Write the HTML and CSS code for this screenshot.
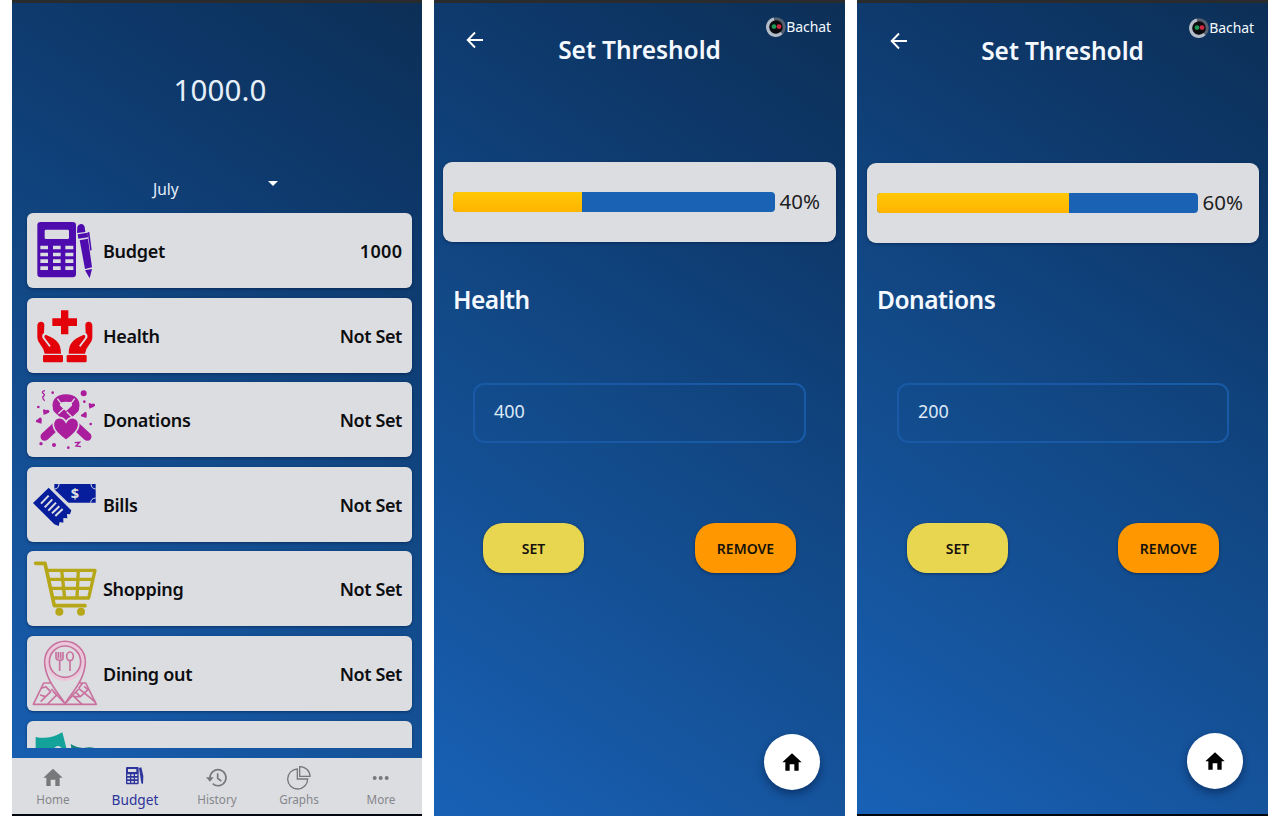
FILE: index.html
```html
<!DOCTYPE html>
<html lang="en">
<head>
<meta charset="utf-8">
<title>Bachat</title>
<link rel="stylesheet" href="styles.css">
</head>
<body>
<main class="screens">
  <section class="phone phone-budget">
    <header class="summary">
      <div class="total">1000.0</div>
      <div class="month"><span>July</span><i class="caret"></i></div>
    </header>
    <div class="list">
      <article class="card">
        <svg class="pic" viewBox="45 24 228 225">
          <g fill="#4e0cae">
            <path fill-rule="evenodd" d="M86 51H182Q192 51 192 61V207Q192 217 182 217H86Q76 217 76 207V61Q76 51 86 51ZM102 74Q98 74 98 78V98Q98 102 102 102H167Q171 102 171 98V78Q171 74 167 74Z"/>
            <path d="M195 84L196 66Q198 58 206 57Q215 56 218 66L220 81ZM197 88L227 83L228 97L199 101ZM203 106L228 101L240 187L219 192ZM219 196L240 192L233 220ZM227 82L232 81L239 135L235 137Z"/>
          </g>
          <path fill="#dcdde1" d="M85 122h23v11h-23zm38 0h23v11h-23zm37 0h24v11h-24zM85 143h23v11h-23zm38 0h23v11h-23zm37 0h24v11h-24zM85 163h23v11h-23zm38 0h23v11h-23zm37 0h24v11h-24zM85 184h23v11h-23zm38 0h23v11h-23zm37 0h24v11h-24z"/>
        </svg>
        <span class="name">Budget</span><span class="value amount">1000</span>
      </article>
      <article class="card">
        <svg class="pic" viewBox="45 278 228 225">
          <g fill="#e30209">
            <path d="M147 315h22v24h26v23h-26v25h-22v-25h-26v-23h26z"/>
            <g id="hand">
              <path d="M76 360Q77 350 87 349Q97 350 97 359L96 383Q89 387 91 397L112 425L116 421L98 397Q95 388 103 389Q128 399 138 412Q147 423 147 445H98Q97 432 86 419Q76 408 76 397Z"/>
              <rect x="93" y="449" width="60" height="22" rx="4"/>
            </g>
            <use href="#hand" transform="translate(317 0) scale(-1 1)"/>
          </g>
        </svg>
        <span class="name">Health</span><span class="value">Not Set</span>
      </article>
      <article class="card">
        <svg class="pic" viewBox="45 22 228 225">
          <g fill="none" stroke="#aa1e9d">
            <path d="M98 186L189 102M226 186L135 102" stroke-linecap="round" stroke-width="25"/>
            <path d="M133 97Q129 71 162 70Q195 71 191 97" stroke-width="22"/>
          </g>
          <path fill="#dcdde1" d="M147 84Q162 78 177 84L162 98Z"/>
          <path fill="none" stroke="#dcdde1" stroke-width="4" d="M136 72L147 86M188 72L177 86M139 117L177 82M164 111L188 135"/>
          <path fill="#aa1e9d" stroke="#dcdde1" stroke-width="5" d="M162 197Q126 172 124 153Q123 132 140 129Q155 128 162 142Q170 128 184 129Q202 133 200 153Q198 172 162 197Z"/>
          <g fill="#aa1e9d">
            <circle cx="215" cy="56" r="9"/><circle cx="122" cy="54" r="4"/><circle cx="217" cy="81" r="4"/><circle cx="79" cy="97" r="4"/><circle cx="236" cy="148" r="4"/><circle cx="87" cy="207" r="5"/><circle cx="126" cy="211" r="6"/><circle cx="169" cy="219" r="4"/>
            <path id="mini" d="M95 121L93 107Q96 101 101 107Q107 103 112 108Q114 114 107 116Z"/>
            <use href="#mini" x="137" y="-19"/>
            <path id="mini2" d="M72 142Q70 136 78 134Q81 128 87 129Q91 132 88 147Z"/>
            <use href="#mini2" x="135" y="-17"/>
          </g>
          <path d="M99 48Q88 50 93 56Q101 60 94 65Q89 69 98 78M188 204L203 203L192 214L207 216" fill="none" stroke="#aa1e9d" stroke-width="4"/>
        </svg>
        <span class="name">Donations</span><span class="value">Not Set</span>
      </article>
      <article class="card">
        <svg class="pic" viewBox="45 276 228 225">
          <path fill="#061e9c" d="M127 327H251V383H165L127 347Z"/>
          <path fill="#061e9c" d="M110 338L178 406L174 418L165 417L166 430L154 429L154 443L143 441L140 453L127 448L63 384Z"/>
          <g fill="none" stroke="#dcdde1">
            <path stroke-width="3" d="M127 342Q140 342 141 327M237 327Q238 341 251 342M236 383Q237 370 251 369"/>
            <path stroke-width="6" d="M87 386L110 362M98 397L121 373M109 407L132 383M120 415L142 394M130 423L152 402"/>
            <path stroke-width="4" d="M124 343L171 388"/>
          </g>
          <text x="189" y="371" text-anchor="middle" class="dollar">$</text>
        </svg>
        <span class="name">Bills</span><span class="value">Not Set</span>
      </article>
      <article class="card">
        <svg class="pic" viewBox="45 20 228 225">
          <g fill="none" stroke="#b6a718" stroke-linejoin="round">
            <path stroke-width="11" stroke-linecap="round" d="M71 57H99L127 184H219"/>
            <path stroke-width="10" d="M104 78H249L230 161H123M109 105H243M116 132H237M149 78L158 161M199 78L195 161"/>
          </g>
          <g fill="#b6a718"><circle cx="142" cy="202" r="12"/><circle cx="207" cy="202" r="12"/></g>
        </svg>
        <span class="name">Shopping</span><span class="value">Not Set</span>
      </article>
      <article class="card">
        <svg class="pic" viewBox="45 273 228 225">
          <g fill="none" stroke="#c9729f" stroke-width="5" stroke-linejoin="round">
            <path d="M126 414H95L64 478H253L221 414H192"/>
            <path d="M88 430L101 425L116 440L101 455L84 450M118 432L159 476M136 448L107 477M101 455L86 470M124 440L132 448"/>
            <path d="M200 432L159 476M182 451L210 478M192 442L205 455L186 455M200 430L250 471M205 455L228 434L216 424M212 414L200 430"/>
            <path fill="#dcdde1" d="M159 476C144 450 98 404 98 350A61 61 0 0 1 220 350C220 404 174 450 159 476Z"/>
            <circle cx="159" cy="350" r="54" stroke="#edc6dc" stroke-width="8"/>
            <circle cx="159" cy="350" r="47"/>
            <path d="M143 378V344M132 321V339Q133 346 143 346Q153 346 153 339V321M139 321V341M146 321V341M174 378V347"/>
            <ellipse cx="174" cy="334" rx="10" ry="13"/>
          </g>
        </svg>
        <span class="name">Dining out</span><span class="value">Not Set</span>
      </article>
      <article class="card">
        <svg class="pic" viewBox="45 48 228 225">
          <path fill="#13a39a" d="M71 96Q112 105 151 82L165 136H71Z"/>
          <path fill="#dcdde1" d="M126 130Q138 116 150 130Z"/>
          <path fill="#13837f" d="M176 117Q192 128 214 129Q230 125 246 128V140H180Z"/>
        </svg>
      </article>
    </div>
    <nav class="tabs">
      <a class="tab">
        <svg viewBox="78 183 90 72"><path fill="#77787a" d="M123 191L152 218H143V243H130V224H116V243H103V218H94Z"/></svg>
        <span>Home</span>
      </a>
      <a class="tab active">
        <svg viewBox="324 183 90 72">
          <rect x="342" y="186" width="38" height="52" rx="3" fill="#2d349a"/>
          <path fill="#dcdde1" d="M348 192h25v9h-25zM346 208h8v5h-8zm12 0h7v5h-7zm11 0h7v5h-7zM346 218h8v5h-8zm12 0h7v5h-7zm11 0h7v5h-7zM346 228h8v5h-8zm12 0h7v5h-7zm11 0h7v5h-7z"/>
          <path fill="#2d349a" d="M381 189L388 187L394 213L393 237L388 235Z"/>
        </svg>
        <span>Budget</span>
      </a>
      <a class="tab">
        <svg viewBox="-24 183 90 72">
          <path fill="none" stroke="#77787a" stroke-width="5" d="M0 219A24 24 0 1 1 8 236M23 205V220L34 228"/>
          <path fill="#77787a" d="M-12 217H11L0 230Z"/>
        </svg>
        <span>History</span>
      </a>
      <a class="tab">
        <svg viewBox="222 183 90 72">
          <path fill="none" stroke="#77787a" stroke-width="4" d="M262 192A30 30 0 1 0 293 222H262ZM269 185V214H300A30 30 0 0 0 269 185Z"/>
        </svg>
        <span>Graphs</span>
      </a>
      <a class="tab">
        <svg viewBox="468 183 90 72"><g fill="#77787a"><circle cx="494" cy="219" r="6"/><circle cx="512" cy="219" r="6"/><circle cx="530" cy="219" r="6"/></g></svg>
        <span>More</span>
      </a>
    </nav>
  </section>

  <section class="phone phone-form">
    <header class="bar">
      <svg class="back" viewBox="0 0 18 18"><path d="M17 9H2M9 1.5L1.7 9L9 16.5"/></svg>
      <h1>Set Threshold</h1>
      <div class="brand">
        <svg viewBox="0 0 20 20"><circle cx="10" cy="10" r="8.3" fill="#0b0b0f" stroke="#54606f" stroke-width="3"/><path d="M8 2A8.3 8.3 0 1 0 15.5 16.2" fill="none" stroke="#b4bcc9" stroke-width="3"/><circle cx="8" cy="9.6" r="2.4" fill="#1c9a55"/><circle cx="13" cy="9.6" r="2.4" fill="#cf2740"/></svg>
        <span>Bachat</span>
      </div>
    </header>
    <div class="meter">
      <div class="track"><div class="fill" style="width:40%"></div></div>
      <span class="pct">40%</span>
    </div>
    <h2>Health</h2>
    <div class="field">400</div>
    <div class="actions"><button class="set">SET</button><button class="remove">REMOVE</button></div>
    <div class="fab"><svg viewBox="94 190 58 54"><path d="M123 191L152 218H143V243H130V224H116V243H103V218H94Z"/></svg></div>
  </section>

  <section class="phone phone-form phone-last">
    <header class="bar">
      <svg class="back" viewBox="0 0 18 18"><path d="M17 9H2M9 1.5L1.7 9L9 16.5"/></svg>
      <h1>Set Threshold</h1>
      <div class="brand">
        <svg viewBox="0 0 20 20"><circle cx="10" cy="10" r="8.3" fill="#0b0b0f" stroke="#54606f" stroke-width="3"/><path d="M8 2A8.3 8.3 0 1 0 15.5 16.2" fill="none" stroke="#b4bcc9" stroke-width="3"/><circle cx="8" cy="9.6" r="2.4" fill="#1c9a55"/><circle cx="13" cy="9.6" r="2.4" fill="#cf2740"/></svg>
        <span>Bachat</span>
      </div>
    </header>
    <div class="meter">
      <div class="track"><div class="fill" style="width:60%"></div></div>
      <span class="pct">60%</span>
    </div>
    <h2>Donations</h2>
    <div class="field">200</div>
    <div class="actions"><button class="set">SET</button><button class="remove">REMOVE</button></div>
    <div class="fab"><svg viewBox="94 190 58 54"><path d="M123 191L152 218H143V243H130V224H116V243H103V218H94Z"/></svg></div>
  </section>
</main>
</body>
</html>
```
FILE: styles.css
```css
* { box-sizing: border-box; }
body { margin: 0; background: #fff; font-family: "Noto Sans", sans-serif; }
.screens { display: grid; grid-template-columns: 410px 411px 411px; gap: 12px; padding: 0 12px; height: 816px; overflow: hidden; }
.phone {
  height: 816px;
  display: flex;
  flex-direction: column;
  overflow: hidden;
  border-top: 3px solid #2a2b2d;
  background: linear-gradient(213deg, #0c2f56 0%, #0e3a6e 25%, #124a89 54%, #155299 72%, #1861b6 100%);
}
.phone-budget, .phone-last { border-bottom: 2px solid #02060f; }

.summary { height: 210px; flex: none; color: #fff; display: flex; flex-direction: column; align-items: center; padding-top: 67px; }
.total { font-size: 29.5px; line-height: 40px; font-weight: 400; padding-left: 6px; color: #e6f0fb; letter-spacing: .1px; }
.month { align-self: stretch; display: flex; justify-content: space-between; align-items: flex-start; padding: 0 144px 0 141px; margin-top: 67px; font-size: 15.5px; line-height: 24px; color: #e3eefc; }
.caret { margin-top: 4px; border: 5px solid transparent; border-top-color: #fff; border-bottom: 0; }

.list { height: 535px; flex: none; overflow: hidden; display: flex; flex-direction: column; gap: 9.6px; padding: 0 10px 0 15px; }
.card { height: 75px; flex: none; border-radius: 6px; background: #dcdde1; box-shadow: 0 1px 3px rgba(0, 20, 60, .5); display: flex; align-items: center; padding-right: 10px; color: #0c0d10; font-size: 18px; font-weight: 600; letter-spacing: -.3px; }
.pic { width: 76px; height: 75px; flex: none; }
.name, .value { padding-top: 1px; }
.value { margin-left: auto; letter-spacing: -.4px; }
.value.amount { letter-spacing: .4px; margin-right: -.5px; }
.dollar { font: 700 44px "Noto Sans", sans-serif; fill: #dcdde1; letter-spacing: 0; }

.tabs { height: 56px; flex: none; margin-top: 10px; background: #dcdde1; display: grid; grid-template-columns: repeat(5, 1fr); }
.tab { display: flex; flex-direction: column; align-items: center; padding-top: 8px; font-size: 11.7px; line-height: 18px; color: #85868a; }
.tab svg { width: 30px; height: 24px; }
.tab.active { color: #2d349a; font-size: 13.7px; line-height: 19px; }

.bar { height: 159px; flex: none; display: grid; grid-template-columns: 124px 1fr 124px; align-items: start; color: #f4f9ff; }
.back { width: 18px; height: 18px; margin: 28px 0 0 32px; fill: none; stroke: #fff; stroke-width: 1.9; }
.bar h1 { margin: 28px 0 0; font-size: 24.5px; line-height: 37px; font-weight: 600; letter-spacing: -.05px; text-align: center; white-space: nowrap; }
.brand { display: flex; align-items: center; justify-content: flex-end; gap: 0; padding-right: 14px; margin-top: 14px; font-size: 14px; line-height: 20px; letter-spacing: -.1px; }
.brand svg { width: 20px; height: 20px; }
.meter { height: 80px; flex: none; margin: 0 9px; padding: 0 16px 0 10px; border-radius: 9px; background: #dcdde1; display: flex; align-items: center; gap: 5px; box-shadow: 0 1px 3px rgba(0, 20, 60, .5); }
.track { flex: 1; height: 20px; border-radius: 4px; background: #1962b4; overflow: hidden; }
.fill { height: 100%; background: linear-gradient(#ffc805, #ffb400); }
.pct { font-size: 20.5px; line-height: 26px; padding-bottom: 2px; color: #1d1e22; }
.phone-form h2 { margin: 40px 0 0 19px; font-size: 24.5px; line-height: 35px; font-weight: 600; letter-spacing: -.5px; color: #f4f9ff; }
.field { height: 60px; flex: none; margin: 66px 39px 0; border: 2px solid #195aa6; border-radius: 11px; padding: 0 19px; color: #dce9f8; font-size: 18px; line-height: 53px; }
.actions { flex: none; display: flex; justify-content: space-between; margin: 80px 49px 0; }
.actions button { width: 101px; height: 50px; padding: 0; border: 0; border-radius: 20px; font: 600 14px "Noto Sans", sans-serif; color: #15120a; box-shadow: 0 1px 3px rgba(0, 15, 50, .5); }
.actions .set { background: #e8d651; }
.actions .remove { background: #ff9800; }
.fab { width: 56px; height: 56px; flex: none; align-self: flex-end; margin: 161px 25px 0 0; border-radius: 50%; background: #fff; display: grid; place-items: center; box-shadow: 0 4px 8px rgba(0, 15, 50, .45); }
.fab svg { width: 20px; height: 18px; }
.phone-last .bar { height: 160px; }
.phone-last .back { margin: 29px 0 0 33px; }
.phone-last .bar h1 { margin-top: 29px; }
.phone-last .brand { margin-top: 15px; }
.phone-last .meter { margin-left: 10px; }
.phone-last h2 { margin: 39px 0 0 20px; }
.phone-last .field { margin-left: 40px; }
.phone-last .actions { margin-left: 50px; }
.phone-last .fab { margin-top: 160px; }
```
